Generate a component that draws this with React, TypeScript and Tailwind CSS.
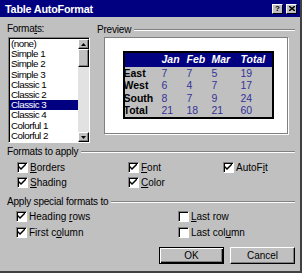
const formats = [
  "(none)",
  "Simple 1",
  "Simple 2",
  "Simple 3",
  "Classic 1",
  "Classic 2",
  "Classic 3",
  "Classic 4",
  "Colorful 1",
  "Colorful 2",
];

const rows = [
  { name: "East", v: ["7", "7", "5", "19"] },
  { name: "West", v: ["6", "4", "7", "17"] },
  { name: "South", v: ["8", "7", "9", "24"] },
  { name: "Total", v: ["21", "18", "21", "60"] },
];

const Check = ({ on }: { on: boolean }) => (
  <span className="w-[11px] h-[11px] shrink-0 bg-white border-t border-l border-t-[#808080] border-l-[#808080] border-b border-r border-b-white border-r-white shadow-[inset_1px_1px_0_#000] flex items-center justify-center">
    {on && (
      <svg width="7" height="7" viewBox="0 0 7 7">
        <path d="M0 2 L0 4 L2 6 L7 1 L7 -1 L2 4 Z" fill="#000" />
      </svg>
    )}
  </span>
);

const Option = ({ on, children }: { on: boolean; children: React.ReactNode }) => (
  <div className="flex items-center gap-[2px] h-[13px]">
    <Check on={on} />
    <span className="text-[10px] leading-[12px]">{children}</span>
  </div>
);

const GroupTitle = ({ children }: { children: React.ReactNode }) => (
  <div className="flex items-center h-[10px]">
    <span className="text-[10px] leading-[10px] tracking-[-0.2px] whitespace-nowrap">{children}</span>
    <div className="flex-1 ml-[3px] h-[2px] border-t border-t-[#808080] border-b border-b-white" />
  </div>
);

const Arrow = ({ up }: { up: boolean }) => (
  <div className="h-[10px] bg-[#c0c0c0] border-t border-l border-t-white border-l-white border-b border-r border-b-black border-r-black shadow-[inset_-1px_-1px_0_#808080] flex items-center justify-center">
    <svg width="5" height="3" viewBox="0 0 5 3">
      <path d={up ? "M2.5 0 L5 3 L0 3 Z" : "M0 0 L5 0 L2.5 3 Z"} fill="#000" />
    </svg>
  </div>
);

export default function App() {
  return (
    <div className="w-[302px] h-[273px] bg-[#c0c0c0] flex flex-col border-r-2 border-b-2 border-r-[#404040] border-b-[#404040] font-['Liberation_Sans',Arial,sans-serif] text-black overflow-hidden">
      {/* title bar */}
      <div className="h-[17px] bg-[#000080] flex items-center pl-[5px] pr-[3px] shrink-0">
        <span className="text-white font-bold text-[10.8px] tracking-[-0.2px] leading-[12px]">Table AutoFormat</span>
        <div className="ml-auto flex gap-[3px]">
          <div className="w-[11px] h-[10px] bg-[#c0c0c0] border-t border-l border-t-white border-l-white border-b border-r border-b-black border-r-black flex items-center justify-center text-[8px] font-bold leading-none">
            ?
          </div>
          <div className="w-[11px] h-[10px] bg-[#c0c0c0] border-t border-l border-t-white border-l-white border-b border-r border-b-black border-r-black flex items-center justify-center">
            <svg width="6" height="5" viewBox="0 0 6 5">
              <path d="M0 0 L6 5 M6 0 L0 5" stroke="#000" strokeWidth="1.4" />
            </svg>
          </div>
        </div>
      </div>

      <div className="flex-1 flex flex-col pl-[7px] pr-[5px] pt-[7px]">
        {/* top section */}
        <div className="flex">
          <div className="w-[83px] flex flex-col">
            <div className="h-[11px] text-[10px] leading-[10px] tracking-[-0.3px]">
              Forma<u>t</u>s:
            </div>
            <div className="mt-[2px] ml-[1px] h-[106px] bg-white border-t border-l border-t-[#808080] border-l-[#808080] border-b border-r border-b-white border-r-white flex">
              <div className="flex-1 flex flex-col border-t border-l border-t-black border-l-black">
                {formats.map((f) => (
                  <div
                    key={f}
                    className={`h-[10.2px] pl-[1px] text-[9.8px] leading-[10.2px] tracking-[-0.5px] whitespace-nowrap ${
                      f === "Classic 3" ? "bg-[#000080] text-white" : ""
                    }`}
                  >
                    {f}
                  </div>
                ))}
              </div>
              <div className="w-[11px] flex flex-col border-t border-t-black">
                <Arrow up />
                <div className="h-[18px] bg-[#c0c0c0] border-t border-l border-t-white border-l-white border-b border-r border-b-black border-r-black shadow-[inset_-1px_-1px_0_#808080]" />
                <div className="flex-1 bg-[#e2e2e2]" />
                <Arrow up={false} />
              </div>
            </div>
          </div>

          <div className="ml-[7px] flex-1 flex flex-col">
            <div className="h-[11px] flex items-center">
              <span className="text-[10px] leading-[10px] tracking-[-0.2px]">Preview</span>
              <div className="flex-1 ml-[3px] h-[2px] border-t border-t-[#808080] border-b border-b-white" />
            </div>
            <div className="mt-[2px] ml-[7px] w-[184px] h-[97px] bg-white border border-[#808080] shadow-[1px_1px_0_#fff] flex items-center justify-center">
              <div className="ml-[4px] mb-[2px] border-2 border-black bg-[#c0c0c0] flex flex-col">
                <div className="h-[14px] bg-[#000080] flex items-center text-white font-bold italic text-[10.5px]">
                  <span className="w-[37px]" />
                  <span className="w-[25px]">Jan</span>
                  <span className="w-[25px]">Feb</span>
                  <span className="w-[29px]">Mar</span>
                  <span className="w-[31px]">Total</span>
                </div>
                {rows.map((r) => (
                  <div key={r.name} className="h-[12.5px] flex items-center text-[10.5px] leading-[12px]">
                    <span className="w-[37px] font-bold -ml-[1px]">{r.name}</span>
                    <span className="w-[25px] text-[#333399] ml-[1px]">{r.v[0]}</span>
                    <span className="w-[25px] text-[#333399]">{r.v[1]}</span>
                    <span className="w-[29px] text-[#333399]">{r.v[2]}</span>
                    <span className="w-[31px] text-[#333399]">{r.v[3]}</span>
                  </div>
                ))}
              </div>
            </div>
          </div>
        </div>

        {/* formats to apply */}
        <div className="mt-[4px]">
          <GroupTitle>Formats to apply</GroupTitle>
        </div>
        <div className="mt-[4px] pl-[10px] grid grid-cols-[111px_95px_1fr] gap-y-[2px]">
          <Option on>
            <u>B</u>orders
          </Option>
          <Option on>
            <u>F</u>ont
          </Option>
          <Option on>
            AutoF<u>i</u>t
          </Option>
          <Option on>
            <u>S</u>hading
          </Option>
          <Option on>
            <u>C</u>olor
          </Option>
          <div />
        </div>

        {/* special formats */}
        <div className="mt-[8px]">
          <GroupTitle>Apply special formats to</GroupTitle>
        </div>
        <div className="mt-[3px] pl-[9px] grid grid-cols-[162px_1fr] gap-y-[3px]">
          <Option on>
            Heading <u>r</u>ows
          </Option>
          <Option on={false}>
            <u>L</u>ast row
          </Option>
          <Option on>
            First c<u>o</u>lumn
          </Option>
          <Option on={false}>
            Last col<u>u</u>mn
          </Option>
        </div>

        {/* buttons */}
        <div className="mt-[8px] flex justify-end gap-[6px]">
          <button className="w-[65px] h-[17px] bg-[#c0c0c0] border border-black shadow-[inset_1px_1px_0_#fff,inset_-1px_-1px_0_#000,inset_-2px_-2px_0_#808080] text-[10px] leading-[15px]">
            OK
          </button>
          <button className="w-[65px] h-[17px] bg-[#c0c0c0] border-t border-l border-t-white border-l-white border-b border-r border-b-black border-r-black shadow-[inset_-1px_-1px_0_#808080] text-[10px] leading-[15px]">
            Cancel
          </button>
        </div>
      </div>
    </div>
  );
}
